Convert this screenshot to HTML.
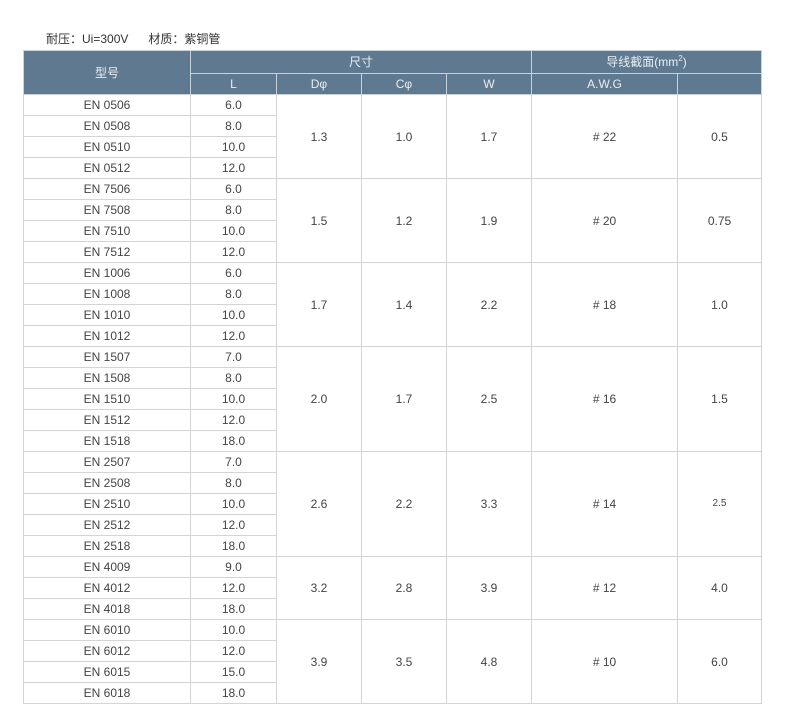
<!DOCTYPE html>
<html><head><meta charset="utf-8"><style>
body{margin:0;background:#fff;font-family:"Liberation Sans","Noto Sans CJK SC",sans-serif;color:#444;}
.t{position:absolute;left:46px;top:30px;font-size:12px;color:#333}
table{position:absolute;left:23px;top:50px;border-collapse:collapse;table-layout:fixed;font-size:12px;}
td{border:1px solid #d4d4d4;text-align:center;padding:0;height:20px;line-height:20px;color:#444}
th{background:#5f7a90;color:#e8eef3;font-weight:normal;border:1px solid #c9d3db;padding:0;height:20px;line-height:20px;font-size:12px}
tr.h1 th{height:22px;line-height:22px}
sup{font-size:8px;line-height:0;vertical-align:5px}
</style></head><body>
<div class="t">耐压：Ui=300V&nbsp;&nbsp;&nbsp;&nbsp;&nbsp;&nbsp;材质：紫铜管</div>
<table>
<colgroup><col style="width:167px"><col style="width:86px"><col style="width:85px"><col style="width:85px"><col style="width:85px"><col style="width:146px"><col style="width:84px"></colgroup>
<tr class="h1"><th rowspan="2">型号</th><th colspan="4">尺寸</th><th colspan="2">导线截面(mm<sup>2</sup>)</th></tr>
<tr><th>L</th><th>Dφ</th><th>Cφ</th><th>W</th><th>A.W.G</th><th></th></tr>
<tr><td>EN 0506</td><td>6.0</td><td rowspan="4">1.3</td><td rowspan="4">1.0</td><td rowspan="4">1.7</td><td rowspan="4"># 22</td><td rowspan="4">0.5</td></tr>
<tr><td>EN 0508</td><td>8.0</td></tr>
<tr><td>EN 0510</td><td>10.0</td></tr>
<tr><td>EN 0512</td><td>12.0</td></tr>
<tr><td>EN 7506</td><td>6.0</td><td rowspan="4">1.5</td><td rowspan="4">1.2</td><td rowspan="4">1.9</td><td rowspan="4"># 20</td><td rowspan="4">0.75</td></tr>
<tr><td>EN 7508</td><td>8.0</td></tr>
<tr><td>EN 7510</td><td>10.0</td></tr>
<tr><td>EN 7512</td><td>12.0</td></tr>
<tr><td>EN 1006</td><td>6.0</td><td rowspan="4">1.7</td><td rowspan="4">1.4</td><td rowspan="4">2.2</td><td rowspan="4"># 18</td><td rowspan="4">1.0</td></tr>
<tr><td>EN 1008</td><td>8.0</td></tr>
<tr><td>EN 1010</td><td>10.0</td></tr>
<tr><td>EN 1012</td><td>12.0</td></tr>
<tr><td>EN 1507</td><td>7.0</td><td rowspan="5">2.0</td><td rowspan="5">1.7</td><td rowspan="5">2.5</td><td rowspan="5"># 16</td><td rowspan="5">1.5</td></tr>
<tr><td>EN 1508</td><td>8.0</td></tr>
<tr><td>EN 1510</td><td>10.0</td></tr>
<tr><td>EN 1512</td><td>12.0</td></tr>
<tr><td>EN 1518</td><td>18.0</td></tr>
<tr><td>EN 2507</td><td>7.0</td><td rowspan="5">2.6</td><td rowspan="5">2.2</td><td rowspan="5">3.3</td><td rowspan="5"># 14</td><td rowspan="5" style="font-size:10px">2.5</td></tr>
<tr><td>EN 2508</td><td>8.0</td></tr>
<tr><td>EN 2510</td><td>10.0</td></tr>
<tr><td>EN 2512</td><td>12.0</td></tr>
<tr><td>EN 2518</td><td>18.0</td></tr>
<tr><td>EN 4009</td><td>9.0</td><td rowspan="3">3.2</td><td rowspan="3">2.8</td><td rowspan="3">3.9</td><td rowspan="3"># 12</td><td rowspan="3">4.0</td></tr>
<tr><td>EN 4012</td><td>12.0</td></tr>
<tr><td>EN 4018</td><td>18.0</td></tr>
<tr><td>EN 6010</td><td>10.0</td><td rowspan="4">3.9</td><td rowspan="4">3.5</td><td rowspan="4">4.8</td><td rowspan="4"># 10</td><td rowspan="4">6.0</td></tr>
<tr><td>EN 6012</td><td>12.0</td></tr>
<tr><td>EN 6015</td><td>15.0</td></tr>
<tr><td>EN 6018</td><td>18.0</td></tr>
</table>
</body></html>
